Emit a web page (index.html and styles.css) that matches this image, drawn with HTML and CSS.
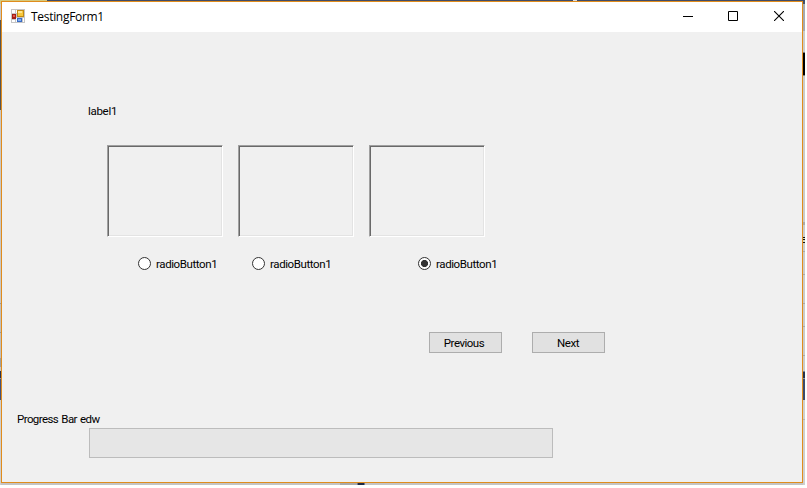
FILE: index.html
```html
<!DOCTYPE html>
<html lang="en">
<head>
<meta charset="utf-8">
<title>TestingForm1</title>
<link rel="stylesheet" href="styles.css">
</head>
<body>
<div class="desktop">
  <main class="window">
    <header class="titlebar">
      <svg class="app-icon" width="14" height="14" viewBox="0 0 14 14">
        <path fill="#c5c5c5" d="M0 0h14v14H0z"/>
        <path fill="#fff" d="M1 1h3v3H1zM5 1h1v3H5zM1 11h3v2H1zM5 9h1v4H5zM12 9h1v4h-1z"/>
        <path fill="#a31d15" d="M1 5h4v5H1z"/><path fill="#e45a4c" d="M2 6h2v2H2z"/>
        <path fill="#c18a12" d="M6 1h7v7H6z"/><path fill="#f8c83c" d="M7 2h5v5H7z"/><path fill="#ffe58e" d="M7 2h4v2H7z"/>
        <path fill="#396bc4" d="M6 9h5v4H6z"/><path fill="#82aff2" d="M7 10h3v2H7z"/>
      </svg>
      <h1 class="title">TestingForm1</h1>
      <div class="controls">
        <svg width="10" height="10" viewBox="0 0 10 10"><path fill="#000" d="M0 5h10v1H0z"/></svg>
        <svg width="10" height="10" viewBox="0 0 10 10"><path fill="none" stroke="#000" d="M.5 .5h9v9h-9z"/></svg>
        <svg class="close" width="10" height="10" viewBox="0 0 10 10"><path fill="none" stroke="#000" stroke-width="1.1" d="M0 0l10 10M10 0L0 10"/></svg>
      </div>
    </header>
    <section class="form">
      <div class="caption"><span class="t-label">label1</span></div>
      <div class="pictures"><div class="picture"></div><div class="picture"></div><div class="picture"></div></div>
      <div class="radios">
        <label class="radio"><i class="dot"></i><span class="t-radio">radioButton1</span></label>
        <label class="radio"><i class="dot"></i><span class="t-radio">radioButton1</span></label>
        <label class="radio last"><i class="dot checked"></i><span class="t-radio">radioButton1</span></label>
      </div>
      <div class="actions">
        <button class="btn">Previous</button>
        <button class="btn next">Next</button>
      </div>
      <div class="progress-label"><span class="t-progress">Progress Bar edw</span></div>
      <div class="progress"></div>
    </section>
  </main>
</div>
</body>
</html>
```
FILE: styles.css
```css
* { box-sizing: border-box; }
body { margin: 0; background: #fff; overflow: hidden; font: 11.5px/14px Roboto, "Liberation Sans", sans-serif; color: #000; }
.desktop {
  width: 805px; height: 485px; padding: 1px 2px 2px 1px;
  background:
    linear-gradient(#d5c97d, #d5c97d) 0 0 / 47px 1px no-repeat,
    linear-gradient(#ddd, #ddd) 573px 0 / 4px 1px no-repeat,
    linear-gradient(90deg, #aaa 0 17px, #68758c 17px 18px, #1d2945 18px 24px, #68758c 24px 25px) 340px 483px / 25px 2px no-repeat,
    linear-gradient(#3f4b68, #3f4b68) 0 0 / 805px 1px no-repeat,
    linear-gradient(#d5c97d 0 4px, #c8c8c8 4px 20px, #555 20px 110px, #c8c8c8 110px 303px, #999 303px 304px, #c0c0c0 304px 332px, #999 332px 333px, #c0c0c0 333px 358px, #a0a0a0 358px 367px, #c8c8c8 367px 371px, #27324e 371px 378px, #8a93a5 378px 379px, #44527a 379px 400px, #cfcfcf 400px) 0 0 / 1px 485px no-repeat,
    linear-gradient(#43506e 0 4px, #a5a9b2 4px 31px, #cbcbcb 31px 52px, #777 52px 53px, #000 53px 75px, #777 75px 76px, #cbcbcb 76px 222px, #aaa 222px 225px, #cbcbcb 225px 237px, #111 237px 238px, #d5d8bf 238px 239px, #111 239px 240px, #d5d8bf 240px 242px, #111 242px 243px, #cbcbcb 243px 251px, #aaa 251px 252px, #cbcbcb 252px 274px, #aaa 274px 275px, #cbcbcb 275px 303px, #aaa 303px 304px, #cbcbcb 304px 326px, #aaa 326px 327px, #cbcbcb 327px 355px, #aaa 355px 356px, #cbcbcb 356px 371px, #777f90 371px 372px, #27324e 372px 378px, #8a93a5 378px 379px, #3d4b6c 379px 400px, #cfcfcf 400px 419px, #b5b5b5 419px 420px, #cfcfcf 420px) 803px 0 / 2px 485px no-repeat,
    #c4c4c4;
}
.window { height: 482px; border: 1px solid #e08c1c; background: #f0f0f0; }
.titlebar { display: flex; align-items: flex-start; height: 30px; padding: 7px 13px 0 9px; background: #fff; }
.app-icon { display: block; margin-right: 6px; }
.title { margin: 0; font: 400 12px/16px "Open Sans", sans-serif; letter-spacing: -.3px; }
.controls { display: flex; gap: 35px; margin: 2px 5px 0 auto; }
.controls svg { display: block; }
.controls .close { margin-left: 1px; }
.form { height: 450px; }
.form span { display: block; white-space: nowrap; }
.caption { padding: 72px 0 0 86px; }
.pictures { display: flex; gap: 15px; padding: 27px 0 0 105px; }
.picture { width: 116px; height: 92px; border: 1px solid; border-color: #a0a0a0 #fff #fff #a0a0a0; box-shadow: inset 1px 1px #696969, inset -1px -1px #e3e3e3; }
.radios { display: flex; padding: 20px 0 0 136px; }
.radio { display: flex; align-items: center; width: 114px; height: 13px; }
.radio.last { margin-left: 52px; }
.dot { width: 13px; height: 13px; margin-right: 5px; flex: none; border: 1px solid #333; border-radius: 50%; background: #fff; }
.dot.checked { background: radial-gradient(circle, #333 0 3.2px, #fff 3.9px); }
.actions { display: flex; gap: 30px; padding: 62px 0 0 427px; }
.btn { width: 73px; height: 21px; padding: 1px 3px 0 0; border: 1px solid #adadad; background: #e1e1e1; font: inherit; line-height: 19px; letter-spacing: -.5px; color: #000; }
.btn.next { padding-right: 1px; letter-spacing: -.4px; }
.progress-label { padding: 59px 0 0 15px; }
.progress { width: 464px; height: 30px; margin: 2px 0 0 87px; border: 1px solid #bcbcbc; background: #e6e6e6; }
.t-radio { letter-spacing: -.4px; }
.t-label { letter-spacing: -.3px; }
.t-progress { letter-spacing: -.58px; word-spacing: .9px; }
```
